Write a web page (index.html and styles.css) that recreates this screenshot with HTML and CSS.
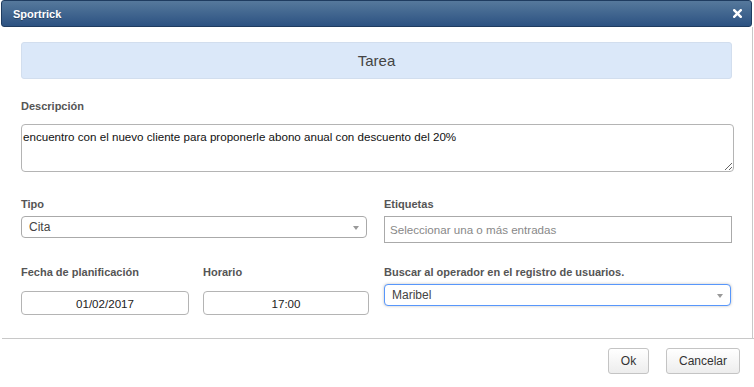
FILE: index.html
```html
<!DOCTYPE html>
<html lang="es">
<head>
    <meta charset="UTF-8">
    <meta name="viewport" content="width=device-width, initial-scale=1.0">
    <title>Sportrick - Tarea</title>
    <link rel="stylesheet" href="styles.css">
</head>
<body>
    <div class="dialog">
        <div class="titlebar">
            <span class="title">Sportrick</span>
            <span class="close">
                <svg width="9" height="9" viewBox="0 0 9 9"><path d="M1.2 1.2 L7.8 7.8 M7.8 1.2 L1.2 7.8" stroke="#fff" stroke-width="2.4" stroke-linecap="square"/></svg>
            </span>
        </div>

        <div class="dialog-body">
            <div class="heading">Tarea</div>

            <label class="label label-desc">Descripción</label>
            <textarea class="textarea" readonly>encuentro con el nuevo cliente para proponerle abono anual con descuento del 20%</textarea>

            <div class="form-grid">
                <div class="field">
                    <label class="label">Tipo</label>
                    <div class="select select-tipo">
                        <span>Cita</span>
                        <span class="arrow"></span>
                    </div>
                </div>
                <div class="field">
                    <label class="label">Etiquetas</label>
                    <input type="text" class="input" placeholder="Seleccionar una o más entradas">
                </div>

                <div class="field split">
                    <div class="field">
                        <label class="label">Fecha de planificación</label>
                        <input type="text" class="input rounded centered" value="01/02/2017">
                    </div>
                    <div class="field">
                        <label class="label">Horario</label>
                        <input type="text" class="input rounded centered" value="17:00">
                    </div>
                </div>
                <div class="field">
                    <label class="label">Buscar al operador en el registro de usuarios.</label>
                    <div class="select select-focus">
                        <span>Maribel</span>
                        <span class="arrow"></span>
                    </div>
                </div>
            </div>
        </div>

        <div class="dialog-footer">
            <button class="btn btn-ok">Ok</button>
            <button class="btn">Cancelar</button>
        </div>
    </div>
</body>
</html>
```

FILE: styles.css
```css
body {
    margin: 0;
    padding: 0;
    font-family: "Liberation Sans", Arial, sans-serif;
    background: #fff;
    color: #333;
}

.dialog {
    width: 754px;
    height: 387px;
    overflow: hidden;
}

.titlebar {
    display: flex;
    justify-content: space-between;
    align-items: center;
    height: 25px;
    margin: 0 2px 0 1px;
    padding: 0 11px;
    background: linear-gradient(to bottom, #56799c, #2c5282);
    border: 1px solid #1f3c60;
    border-radius: 3px;
}

.title {
    color: #fff;
    font-size: 11px;
    font-weight: bold;
    text-shadow: 0 1px 0 rgba(0, 0, 0, 0.3);
}

.close {
    display: flex;
    margin-right: -2px;
}

.dialog-body {
    height: 296px;
    margin-right: 1px;
    padding: 15px 20px 0 21px;
    border-right: 1px solid #c8c8c8;
}

.heading {
    height: 35px;
    line-height: 35px;
    text-align: center;
    font-size: 15px;
    color: #444;
    background: #dbe8f9;
    border: 1px solid #d2deee;
    border-radius: 3px;
}

.label {
    display: block;
    font-size: 11px;
    font-weight: bold;
    line-height: 16px;
    color: #555;
}

.label-desc {
    margin: 19px 0 10px;
}

.textarea {
    display: block;
    box-sizing: border-box;
    width: 713px;
    height: 48px;
    margin: 0;
    padding: 5px 1px;
    font-family: "Liberation Sans", Arial, sans-serif;
    font-size: 11.6px;
    color: #111;
    border: 1px solid #b4b4b4;
    border-radius: 4px;
    resize: vertical;
    outline: none;
}

.form-grid {
    display: grid;
    grid-template-columns: 348px 348px;
    column-gap: 15px;
    row-gap: 21px;
    margin-top: 24px;
}

.field {
    display: flex;
    flex-direction: column;
}

.field .label {
    margin-bottom: 4px;
}

.split {
    flex-direction: row;
    gap: 14px;
}

.split .field {
    width: 168px;
}

.split .field:last-child {
    width: 166px;
}

.split .label {
    margin-bottom: 11px;
}

.select {
    display: flex;
    justify-content: space-between;
    align-items: center;
    box-sizing: border-box;
    height: 22px;
    padding: 0 7px 0 7px;
    font-size: 12px;
    color: #444;
    border: 1px solid #aaa;
    border-radius: 4px;
    background: #fff;
}

.select-tipo {
    width: 346px;
}

.select-focus {
    width: 347px;
    border-color: #5897fb;
    box-shadow: 0 0 3px rgba(0, 0, 0, 0.25);
}

.arrow {
    width: 0;
    height: 0;
    border-left: 3px solid transparent;
    border-right: 3px solid transparent;
    border-top: 4px solid #999;
    margin-top: 2px;
}

.input {
    box-sizing: border-box;
    width: 100%;
    height: 27px;
    margin: 0;
    padding: 0 5px;
    font-family: "Liberation Sans", Arial, sans-serif;
    font-size: 11.6px;
    color: #222;
    border: 1px solid #aaa;
    border-radius: 0;
    outline: none;
}

.input::placeholder {
    color: #888;
}

.rounded {
    height: 24px;
    border-radius: 4px;
    border-color: #b4b4b4;
}

.centered {
    text-align: center;
}

.dialog-footer {
    display: flex;
    justify-content: flex-end;
    gap: 17px;
    margin-left: 2px;
    padding: 9px 14px 0 0;
    height: 40px;
    border-top: 1px solid #c8c8c8;
}

.btn {
    height: 26px;
    padding: 0 12px;
    font-family: "Liberation Sans", Arial, sans-serif;
    font-size: 12px;
    color: #333;
    background: linear-gradient(to bottom, #fff, #ededed);
    border: 1px solid #c4c4c4;
    border-radius: 3px;
}

.btn-ok {
    width: 41px;
    padding: 0;
}
```
